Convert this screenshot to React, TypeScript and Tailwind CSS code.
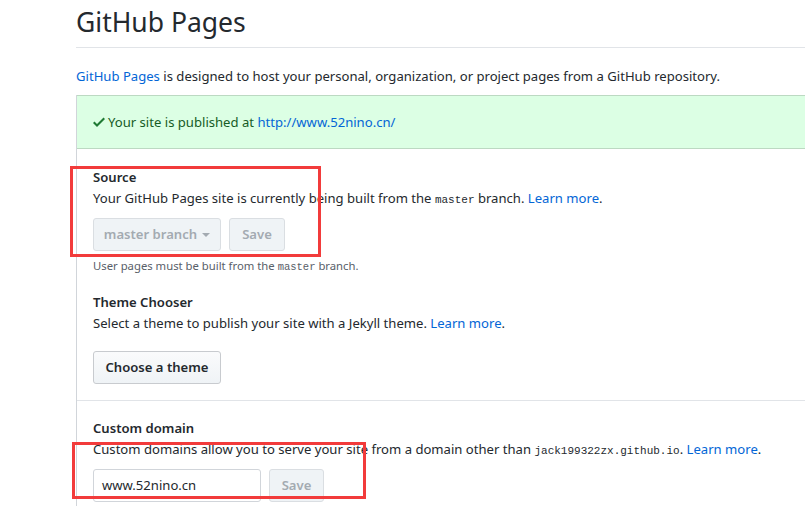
import React from "react";

const mono = { fontFamily: '"Liberation Mono", "DejaVu Sans Mono", monospace' };

function Check() {
  return (
    <svg width="12" height="16" viewBox="0 0 12 16" className="inline-block mr-[3px] -mt-[2px] align-middle" fill="#1f7a34">
      <path fillRule="evenodd" d="M12 5l-8 8-4-4 1.5-1.5L4 10l6.5-6.5L12 5z" />
    </svg>
  );
}

export default function App() {
  return (
    <div
      className="relative w-[805px] h-[506px] overflow-hidden bg-white text-[#24292e] text-[13.1px] leading-[21px]"
      style={{ fontFamily: '"Noto Sans", "Open Sans", sans-serif' }}
    >
      <div className="ml-[76px] w-[900px]">
        <div className="pt-[6px] pb-[9px] border-b border-[#e1e4e8]">
          <h2 className="text-[26.5px] leading-[32px] font-normal">GitHub Pages</h2>
        </div>
        <p className="mt-[18px] mb-[8px]">
          <a className="text-[#0366d6]">GitHub Pages</a> is designed to host your personal, organization, or project pages from a GitHub repository.
        </p>
        <div className="border-l border-[#d1d5da]">
          <div className="bg-[#dcffe4] border-t border-b border-[#bcd9c2] px-[16px] pt-[16px] pb-[15px] text-[#165c26]">
            <Check />Your site is published at <a className="text-[#0366d6]">http://www.52nino.cn/</a>
          </div>
          <div className="px-[16px] pt-[18px]">
            <div className="font-semibold">Source</div>
            <p>
              Your GitHub Pages site is currently being built from the{" "}
              <code style={mono} className="text-[11px] leading-none">master</code> branch.{" "}
              <a className="text-[#0366d6]">Learn more</a>.
            </p>
            <div className="mt-[9px] flex gap-[8px]">
              <button className="h-[33px] w-[128px] rounded-[3px] border border-[#dadee2] bg-[#eff3f6] text-[#a3aab1] font-semibold flex items-center justify-center gap-[5px]">
                master branch
                <span className="inline-block w-0 h-0 border-l-[4px] border-r-[4px] border-t-[4px] border-l-transparent border-r-transparent border-t-[#a3aab1]" />
              </button>
              <button className="h-[33px] w-[56px] rounded-[3px] border border-[#dadee2] bg-[#eff3f6] text-[#a3aab1] font-semibold">Save</button>
            </div>
            <p className="mt-[6px] text-[11.3px] leading-[18px] text-[#586069]">
              User pages must be built from the <code style={mono} className="text-[10.5px] leading-none">master</code> branch.
            </p>
          </div>
          <div className="px-[16px] pt-[17px] pb-[16px] border-b border-[#e1e4e8]">
            <div className="font-semibold">Theme Chooser</div>
            <p>
              Select a theme to publish your site with a Jekyll theme. <a className="text-[#0366d6]">Learn more</a>.
            </p>
            <button className="mt-[17px] h-[33px] w-[128px] rounded-[3px] border border-[#c8cbcf] bg-gradient-to-b from-[#fafbfc] to-[#eff3f6] font-semibold text-[#24292e]">
              Choose a theme
            </button>
          </div>
          <div className="px-[16px] pt-[17px] pb-[16px]">
            <div className="font-semibold">Custom domain</div>
            <p>
              Custom domains allow you to serve your site from a domain other than{" "}
              <code style={mono} className="text-[11px] leading-none">jack199322zx.github.io</code>.{" "}
              <a className="text-[#0366d6]">Learn more</a>.
            </p>
            <div className="mt-[9px] flex gap-[8px]">
              <div className="h-[33px] w-[168px] rounded-[3px] border border-[#d1d5da] bg-white px-[8px] flex items-center">www.52nino.cn</div>
              <button className="h-[33px] w-[55px] rounded-[3px] border border-[#dadee2] bg-[#eff3f6] text-[#a3aab1] font-semibold">Save</button>
            </div>
          </div>
        </div>
      </div>
      <div className="absolute left-[70px] top-[166px] w-[251px] h-[91px] border-[3px] border-[#f23b3b]" />
      <div className="absolute left-[72px] top-[442px] w-[294px] h-[57px] border-[3px] border-[#f23b3b]" />
    </div>
  );
}
